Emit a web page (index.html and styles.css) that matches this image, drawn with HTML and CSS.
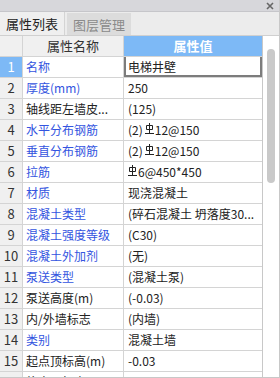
FILE: index.html
```html
<!DOCTYPE html>
<html lang="zh-CN">
<head>
  <meta charset="UTF-8">
  <title>属性列表</title>
  <link rel="stylesheet" href="styles.css">
</head>
<body>
  <div class="panel">
    <div class="titlebar">
      <svg class="close" width="8" height="8" viewBox="0 0 8 8"><path d="M1 1L7 7M7 1L1 7" stroke="#666" stroke-width="1.6"/></svg>
    </div>
    <div class="tabs">
      <div class="tab active">属性列表</div>
      <div class="tab">图层管理</div>
    </div>
    <div class="main">
      <div class="grid-wrap">
        <table class="props">
          <colgroup>
            <col class="c-num">
            <col class="c-name">
            <col class="c-val">
          </colgroup>
          <thead>
            <tr>
              <th class="num"></th>
              <th class="name-h">属性名称</th>
              <th class="val-h">属性值</th>
            </tr>
          </thead>
          <tbody>
            <tr><td class="num cur">1</td><td class="name blue">名称</td><td class="val sel">电梯井壁</td></tr>
            <tr><td class="num">2</td><td class="name blue">厚度(mm)</td><td class="val">250</td></tr>
            <tr><td class="num">3</td><td class="name">轴线距左墙皮...</td><td class="val">(125)</td></tr>
            <tr><td class="num">4</td><td class="name blue">水平分布钢筋</td><td class="val">(2)<svg class="bar" viewBox="0 0 9 11"><path d="M4.5 0V10.5M1.5 2.5h6v4h-6zM0 10.5h9" fill="none" stroke="#222" stroke-width="1"/></svg>12@150</td></tr>
            <tr><td class="num">5</td><td class="name blue">垂直分布钢筋</td><td class="val">(2)<svg class="bar" viewBox="0 0 9 11"><path d="M4.5 0V10.5M1.5 2.5h6v4h-6zM0 10.5h9" fill="none" stroke="#222" stroke-width="1"/></svg>12@150</td></tr>
            <tr><td class="num">6</td><td class="name blue">拉筋</td><td class="val"><svg class="bar first" viewBox="0 0 9 11"><path d="M4.5 0V10.5M1.5 2.5h6v4h-6zM0 10.5h9" fill="none" stroke="#222" stroke-width="1"/></svg>6@450*450</td></tr>
            <tr><td class="num">7</td><td class="name blue">材质</td><td class="val">现浇混凝土</td></tr>
            <tr><td class="num">8</td><td class="name blue">混凝土类型</td><td class="val">(碎石混凝土 坍落度30...</td></tr>
            <tr><td class="num">9</td><td class="name blue">混凝土强度等级</td><td class="val">(C30)</td></tr>
            <tr><td class="num">10</td><td class="name blue">混凝土外加剂</td><td class="val">(无)</td></tr>
            <tr><td class="num">11</td><td class="name blue">泵送类型</td><td class="val">(混凝土泵)</td></tr>
            <tr><td class="num">12</td><td class="name">泵送高度(m)</td><td class="val">(-0.03)</td></tr>
            <tr><td class="num">13</td><td class="name">内/外墙标志</td><td class="val">(内墙)</td></tr>
            <tr><td class="num">14</td><td class="name blue">类别</td><td class="val">混凝土墙</td></tr>
            <tr><td class="num">15</td><td class="name">起点顶标高(m)</td><td class="val">-0.03</td></tr>
            <tr><td class="num">16</td><td class="name">终点顶标高(m)</td><td class="val">-0.03</td></tr>
          </tbody>
        </table>
      </div>
      <div class="scroll">
        <div class="thumb"></div>
      </div>
    </div>
  </div>
</body>
</html>
```

FILE: styles.css
```css
* {
  margin: 0;
  padding: 0;
  box-sizing: border-box;
}

body {
  font-family: "Noto Sans CJK SC", "Liberation Sans", sans-serif;
  font-size: 12px;
  color: #222;
  background-color: #fff;
}

.panel {
  width: 280px;
  height: 378px;
  display: flex;
  flex-direction: column;
  border-right: 1px solid #c8c8c8;
  border-bottom: 1px solid #c8c8c8;
  overflow: hidden;
}

.titlebar {
  height: 12px;
  flex-shrink: 0;
  background-color: #d7d7db;
  border-bottom: 1px solid #c6c6ca;
  display: flex;
  justify-content: flex-end;
  align-items: center;
  padding-right: 5px;
}

.close {
  display: block;
  margin-top: 1px;
}

.tabs {
  height: 24px;
  flex-shrink: 0;
  display: flex;
  background-color: #ececec;
  border-bottom: 1px solid #d0d0d0;
}

.tab {
  width: 64px;
  height: 22px;
  margin: 1px 0 0 2px;
  display: flex;
  align-items: center;
  justify-content: center;
  font-size: 13px;
  background-color: #dcdcdc;
  color: #8a8a8a;
}

.tab.active {
  width: 65px;
  margin: 0;
  height: 23px;
  background-color: #efefef;
  color: #222;
  border-right: 1px solid #d4d4d4;
}

.main {
  flex: 1;
  display: flex;
  min-height: 0;
}

.grid-wrap {
  width: 263px;
  overflow: hidden;
  border-right: 1px solid #c8c8c8;
}

.props {
  width: 262px;
  table-layout: fixed;
  border-collapse: separate;
  border-spacing: 0;
}

.c-num {
  width: 23px;
}

.c-name {
  width: 101px;
}

.c-val {
  width: 138px;
}

.props th,
.props td {
  height: 21px;
  line-height: 20px;
  font-weight: normal;
  border-bottom: 1px solid #d4d4d4;
  border-right: 1px solid #d4d4d4;
  white-space: nowrap;
  overflow: hidden;
  text-overflow: ellipsis;
  text-align: left;
  padding-left: 3px;
}

.props th {
  background-color: #f0f0f0;
  text-align: center;
  padding-left: 0;
  color: #333;
  font-size: 13px;
}

.props th.val-h {
  background-color: #7db9f6;
  color: #fff;
  font-weight: bold;
  border-right: none;
}

.props td.val {
  border-right: none;
  padding-left: 4px;
}

.props td.num {
  background-color: #f0f0f0;
  text-align: center;
  padding-left: 0;
  font-size: 13px;
  color: #333;
}

.props td.num.cur {
  background-color: #7db9f6;
  color: #fff;
}

.props td.blue {
  color: #3354e0;
}

.props td.sel {
  box-shadow: inset 2px 0 #7c7c7c, inset -2px 0 #7c7c7c, inset 0 -2px #7c7c7c;
}

.bar {
  width: 9px;
  height: 11px;
  vertical-align: 1px;
  margin: 0 1px 0 2px;
}

.bar.first {
  margin-left: 0;
}

.scroll {
  width: 16px;
  background-color: #fff;
  padding: 13px 0 0 4px;
}

.thumb {
  width: 8px;
  height: 134px;
  border-radius: 4px;
  background-color: #c9c9c9;
}
```
